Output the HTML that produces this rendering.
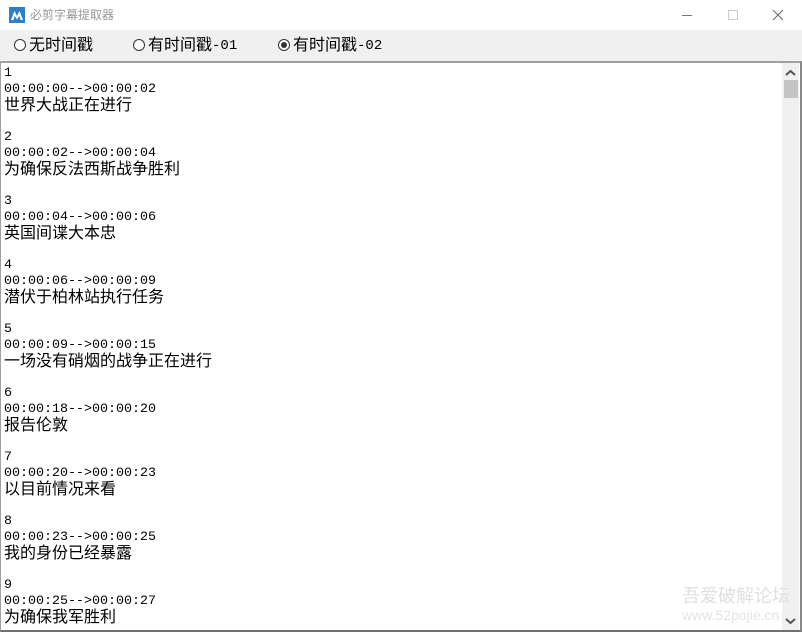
<!DOCTYPE html>
<html><head><meta charset="utf-8"><style>
*{margin:0;padding:0;box-sizing:border-box}
body{width:802px;height:632px;overflow:hidden;background:#fff;font-family:"Liberation Sans","Noto Sans CJK SC",sans-serif;position:relative}
.title{position:absolute;left:0;top:0;width:802px;height:30px;background:#fff}
.icon{position:absolute;left:9px;top:7px;width:16px;height:16px;background:#2d7fc6}
.ttext{position:absolute;left:30px;top:7px;font-size:12px;color:#999;line-height:16px}
.bar{position:absolute;left:0;top:30px;width:802px;height:31px;background:#f0f0f0}
.radio{position:absolute;top:38px;height:16px;font-size:14px;line-height:16px;color:#000;font-family:"Liberation Mono",monospace;white-space:nowrap}
.rc{display:inline-block;width:12px;height:12px;border:1px solid #333;border-radius:50%;vertical-align:top;margin-top:1px;margin-right:3px;position:relative;background:#fff}
.rc.on:after{content:"";position:absolute;left:2px;top:2px;width:6px;height:6px;border-radius:50%;background:#333}
.area{position:absolute;left:0;top:61px;width:802px;height:571px;border-top:2px solid #a0a0a0;border-left:1px solid #a0a0a0;border-bottom:2px solid #707070;border-right:2px solid #888}
.txt{position:absolute;left:4px;top:66px;font-family:"Liberation Mono",monospace;font-size:13.33px;color:#000;width:770px;height:564px;overflow:hidden}
.txt div{height:16px;line-height:16px;white-space:nowrap;overflow:visible}
.c{font-family:"Noto Sans CJK SC",sans-serif;font-size:16px;line-height:16px;display:inline-block;height:16px;vertical-align:top;position:relative;top:-3px}
.sb{position:absolute;left:782px;top:63px;width:17px;height:567px;background:#f0f0f0}
.thumb{position:absolute;left:784px;top:80px;width:14px;height:18px;background:#c4c4c4}
.wm{position:absolute;left:682px;top:584px;color:#e0e0e0;font-size:18px;font-family:"Noto Sans CJK SC",sans-serif;line-height:22px}
.wm2{position:absolute;left:682px;top:607px;color:#e4e4e4;font-size:14px;line-height:16px}
</style></head><body>
<div class="title">
<div class="icon"><svg width="16" height="16" viewBox="0 0 16 16"><path d="M2 13 L5.5 4 L8 9 L10.5 4 L14 13 L11.5 13 L10.5 9 L8 12.5 L5.5 9 L4.5 13Z" fill="#fff"/></svg></div>
<div class="ttext">必剪字幕提取器</div>
<svg style="position:absolute;left:680px;top:8px" width="120" height="16"><line x1="2" y1="7.5" x2="12" y2="7.5" stroke="#777"/><rect x="48.5" y="2.5" width="9" height="9" fill="none" stroke="#ccc"/><path d="M93 2 L103 12 M103 2 L93 12" stroke="#666"/></svg>
</div>
<div class="bar"></div>
<div class="radio" style="left:14px"><span class="rc"></span><span class="c">无时间戳</span></div>
<div class="radio" style="left:133px"><span class="rc"></span><span class="c">有时间戳</span>-01</div>
<div class="radio" style="left:278px"><span class="rc on"></span><span class="c">有时间戳</span>-02</div>
<div class="area"></div>
<div class="txt">
<div>1</div><div>00:00:00-->00:00:02</div><div><span class="c">世界大战正在进行</span></div><div></div>
<div>2</div><div>00:00:02-->00:00:04</div><div><span class="c">为确保反法西斯战争胜利</span></div><div></div>
<div>3</div><div>00:00:04-->00:00:06</div><div><span class="c">英国间谍大本忠</span></div><div></div>
<div>4</div><div>00:00:06-->00:00:09</div><div><span class="c">潜伏于柏林站执行任务</span></div><div></div>
<div>5</div><div>00:00:09-->00:00:15</div><div><span class="c">一场没有硝烟的战争正在进行</span></div><div></div>
<div>6</div><div>00:00:18-->00:00:20</div><div><span class="c">报告伦敦</span></div><div></div>
<div>7</div><div>00:00:20-->00:00:23</div><div><span class="c">以目前情况来看</span></div><div></div>
<div>8</div><div>00:00:23-->00:00:25</div><div><span class="c">我的身份已经暴露</span></div><div></div>
<div>9</div><div>00:00:25-->00:00:27</div><div><span class="c">为确保我军胜利</span></div>
</div>
<div class="sb"><svg width="17" height="17" style="position:absolute;top:2px"><path d="M4 10 L8.5 6 L13 10" stroke="#555" stroke-width="2" fill="none"/></svg><svg width="17" height="17" style="position:absolute;top:550px"><path d="M4 6 L8.5 10 L13 6" stroke="#555" stroke-width="2" fill="none"/></svg></div>
<div class="thumb"></div>
<div class="wm">吾爱破解论坛</div>
<div class="wm2">www.52pojie.cn</div>
</body></html>
